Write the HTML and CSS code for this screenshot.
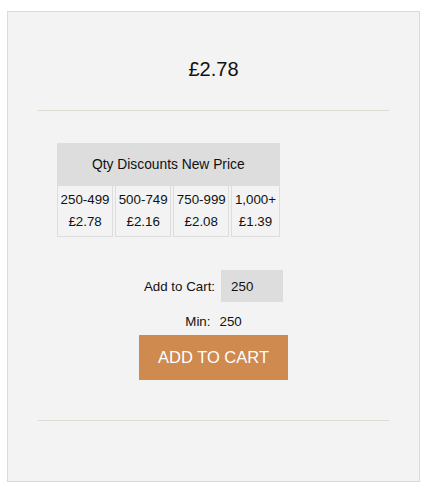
FILE: index.html
```html
<!DOCTYPE html>
<html>
<head>
<meta charset="utf-8">
<link rel="stylesheet" href="styles.css">
</head>
<body>
<div class="box">
  <div class="price">£2.78</div>
  <div class="rule"></div>
  <div class="discounts">
    <div class="disc-head">Qty Discounts New Price</div>
    <div class="disc-row">
      <div class="disc-cell"><div>250-499</div><div>£2.78</div></div>
      <div class="disc-cell"><div>500-749</div><div>£2.16</div></div>
      <div class="disc-cell"><div>750-999</div><div>£2.08</div></div>
      <div class="disc-cell"><div>1,000+</div><div>£1.39</div></div>
    </div>
  </div>
  <div class="cart-row">
    <span class="cart-label">Add to Cart:</span>
    <span class="qty">250</span>
  </div>
  <div class="min">Min:<span class="min-val">250</span></div>
  <div class="btn-wrap"><button class="btn">ADD TO CART</button></div>
  <div class="rule rule-bottom"></div>
</div>
</body>
</html>
```
FILE: styles.css
```css
html, body {
  margin: 0;
  padding: 0;
  background: #ffffff;
}
body {
  font-family: "Liberation Sans", Arial, sans-serif;
  color: #111;
  font-size: 13.33px;
}
.box {
  margin: 11px 8px 10px 7px;
  height: 469px;
  border: 1px solid #dcdcd2;
  background: #f3f3f3;
  padding: 0 30px;
  box-sizing: content-box;
  width: 351px;
}
.price {
  padding-top: 45px;
  font-size: 20px;
  line-height: 24px;
  text-align: center;
}
.rule {
  height: 1px;
  background: #dcdcd0;
  margin-top: 29px;
}
.discounts {
  margin: 32px 0 0 19px;
  display: inline-flex;
  flex-direction: column;
  font-size: 13.33px;
}
.disc-head {
  background: #dddddd;
  height: 43px;
  font-size: 13.8px;
  display: flex;
  align-items: center;
  justify-content: center;
}
.disc-row {
  display: flex;
  gap: 2px;
}
.disc-cell {
  border: 1px solid #dddddd;
  border-top: none;
  padding: 3px 2.6px;
  line-height: 22px;
  text-align: center;
  flex: 1 1 auto;
}
.cart-row {
  margin-top: 33px;
  display: flex;
  justify-content: center;
  align-items: center;
  gap: 6px;
}
.qty {
  width: 52px;
  height: 32px;
  background: #dddddd;
  padding-left: 10px;
  display: flex;
  align-items: center;
}
.min {
  margin-top: 9px;
  line-height: 22px;
  text-align: center;
}
.min-val {
  margin-left: 9px;
}
.btn-wrap {
  margin-top: 2px;
  display: flex;
  justify-content: center;
}
.btn {
  width: 149px;
  height: 45px;
  background: #ce8a4f;
  color: #ffffff;
  border: none;
  font-family: "Liberation Sans", Arial, sans-serif;
  font-size: 16.5px;
  padding: 0;
}
.rule-bottom {
  margin-top: 40px;
}
```
